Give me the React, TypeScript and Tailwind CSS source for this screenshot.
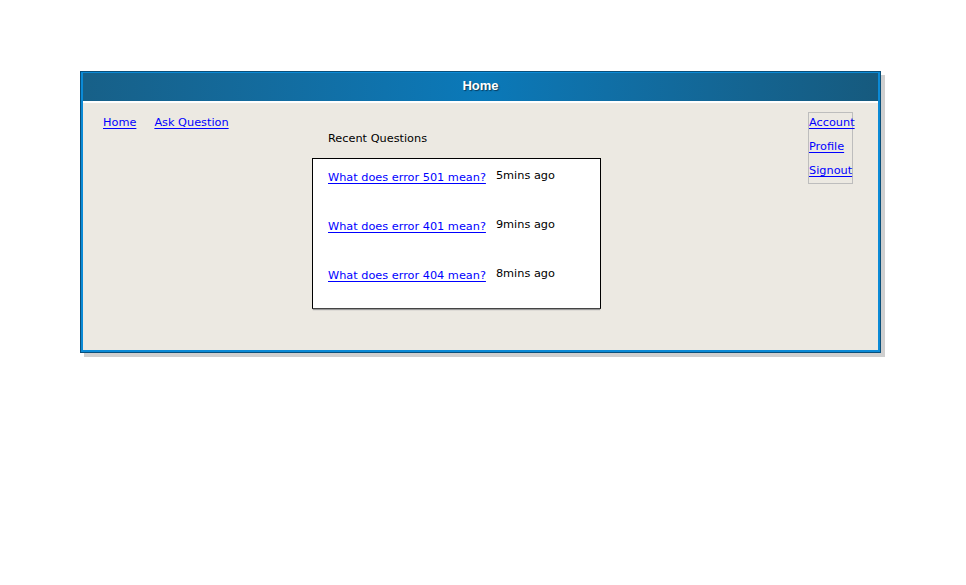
import React from "react";

const sketch = { fontFamily: '"Comic Sans MS", "DejaVu Sans", sans-serif' };

const questions = [
  { title: "What does error 501 mean?", ago: "5mins ago" },
  { title: "What does error 401 mean?", ago: "9mins ago" },
  { title: "What does error 404 mean?", ago: "8mins ago" },
];

const Link: React.FC<{ children: React.ReactNode; className?: string }> = ({ children, className }) => (
  <a href="#" className={`text-[#0000ff] underline underline-offset-2 ${className ?? ""}`}>
    {children}
  </a>
);

export default function App() {
  return (
    <div className="w-[966px] h-[585px] bg-white pt-[71px] pl-[80px]" style={sketch}>
      <div className="w-[801px] border border-[#0a4f7a] shadow-[4px_4px_0_#cfcfcf]">
        <div className="border-2 border-[#0b8ad6] border-t-[1px]">
          <div className="h-[28px] flex items-center justify-center bg-gradient-to-r from-[#176088] via-[#0a79b9] to-[#165a7e]">
            <span
              className="text-white font-bold text-[13px] -mt-[2px] [text-shadow:1px_1px_1px_#0a3a5a]"
              style={{ fontFamily: '"Liberation Sans", Arial, sans-serif' }}
            >
              Home
            </span>
          </div>
          <div className="h-[2px] bg-white" />
          <div className="bg-[#ece9e2] h-[247px] flex pl-[20px] text-[11.3px] leading-[16px]">
            <div className="w-[209px] flex gap-[18px] pt-[12px]">
              <Link>Home</Link>
              <Link>Ask Question</Link>
            </div>
            <div className="w-[289px] pt-[28px]">
              <div className="pl-[16px] text-black">Recent Questions</div>
              <div className="mt-[11px] h-[151px] bg-white border border-black border-b-[#444] shadow-[0_2px_1px_-1px_#999] pl-[15px] pt-[10px] flex flex-col gap-[32px]">
                {questions.map((q) => (
                  <div key={q.title} className="flex items-start gap-[10px]">
                    <Link className="mt-[1px]">{q.title}</Link>
                    <span className="text-black -mt-[1px]">{q.ago}</span>
                  </div>
                ))}
              </div>
            </div>
            <div className="flex-1" />
            <div className="mt-[9px] mr-[25px] w-[45px] h-[72px] border border-[#bdbdbd] flex flex-col pt-[2px] gap-[8px]">
              <Link>Account</Link>
              <Link>Profile</Link>
              <Link>Signout</Link>
            </div>
          </div>
        </div>
      </div>
    </div>
  );
}
